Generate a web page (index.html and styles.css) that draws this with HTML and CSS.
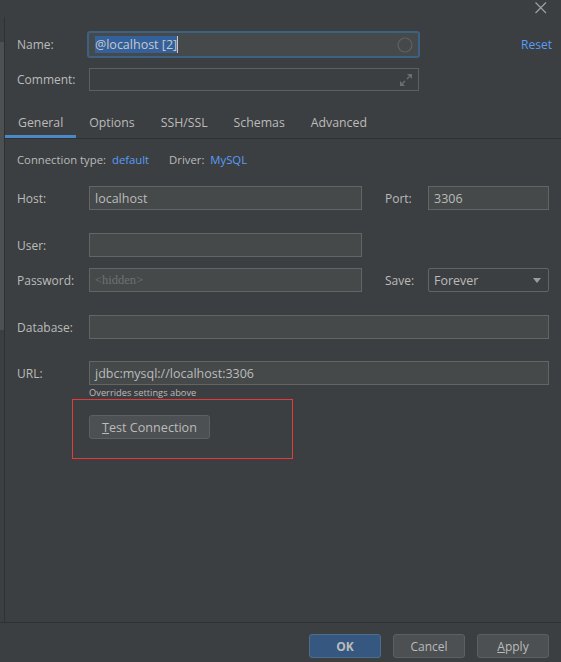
FILE: index.html
```html
<!DOCTYPE html>
<html>
<head>
<meta charset="utf-8">
<link rel="stylesheet" href="styles.css">
</head>
<body>
<div class="window">
  <div class="titlebar">
    <svg class="close" width="12" height="12" viewBox="0 0 12 12"><path d="M0.5 0.5 L11 11 M11 0.5 L0.5 11" stroke="#a0a0a0" stroke-width="1.2" fill="none"/></svg>
  </div>
  <div class="main">
    <div class="side"><div class="s1"></div><div class="s2"></div><div class="s3"></div></div>
    <div class="content">
      <div class="row name-row">
        <span class="lbl lbl-name">Name:</span>
        <div class="name-input">
          <span class="sel">@localhost [2]</span><span class="caret"></span>
          <svg class="circle" width="16" height="16" viewBox="0 0 16 16"><circle cx="8" cy="8" r="7" stroke="#5f6262" stroke-width="1.2" fill="none"/></svg>
        </div>
        <a class="reset">Reset</a>
      </div>
      <div class="row comment-row">
        <span class="lbl">Comment:</span>
        <div class="comment-input">
          <svg class="expand" width="12" height="12" viewBox="0 0 12 12" fill="#6b6e70"><polygon points="12,0 12,5 7,0"/><polygon points="0,12 0,7 5,12"/><path d="M9.5 2.5 L7 5 M2.5 9.5 L5 7" stroke="#6b6e70" stroke-width="1.4"/></svg>
        </div>
      </div>
      <div class="tabs">
        <span class="tab active">General</span>
        <span class="tab">Options</span>
        <span class="tab">SSH/SSL</span>
        <span class="tab">Schemas</span>
        <span class="tab">Advanced</span>
      </div>
      <div class="panel">
        <div class="conn-row">
          <span>Connection type:</span><a class="link">default</a>
          <span class="driver">Driver:</span><a class="link">MySQL</a>
        </div>
        <div class="row host-row">
          <span class="lbl">Host:</span>
          <div class="field host-field">localhost</div>
          <span class="lbl2">Port:</span>
          <div class="field port-field">3306</div>
        </div>
        <div class="row user-row">
          <span class="lbl">User:</span>
          <div class="field host-field"></div>
        </div>
        <div class="row pass-row">
          <span class="lbl">Password:</span>
          <div class="field host-field"><span class="hidden">&lt;hidden&gt;</span></div>
          <span class="lbl2">Save:</span>
          <div class="combo">Forever<span class="arrow"></span></div>
        </div>
        <div class="row db-row">
          <span class="lbl">Database:</span>
          <div class="field wide"></div>
        </div>
        <div class="row url-row">
          <span class="lbl">URL:</span>
          <div class="field wide">jdbc:mysql://localhost:3306</div>
        </div>
        <div class="hint">Overrides settings above</div>
        <div class="redbox">
          <button class="btn test"><u>T</u>est Connection</button>
        </div>
      </div>
    </div>
  </div>
  <div class="footer">
    <button class="btn ok">OK</button>
    <button class="btn">Cancel</button>
    <button class="btn"><u>A</u>pply</button>
  </div>
</div>
</body>
</html>
```
FILE: styles.css
```css
html, body {
  margin: 0;
  padding: 0;
  background: #3c3f41;
}
body {
  font-family: "Open Sans", "Noto Sans", sans-serif;
  font-size: 12px;
  color: #bbbbbb;
  width: 561px;
  height: 662px;
  overflow: hidden;
}
.window {
  display: flex;
  flex-direction: column;
  height: 662px;
}
.titlebar {
  height: 17px;
  display: flex;
  justify-content: flex-end;
  align-items: flex-start;
  padding-right: 14px;
  box-sizing: border-box;
  padding-top: 2px;
}
.main {
  display: flex;
  height: 605px;
}
.side {
  width: 4px;
  display: flex;
  flex-direction: column;
}
.s1 { height: 25px; }
.s2 { height: 288px; background: #4d5052; }
.s3 { flex: 1; }
.content {
  flex: 1;
  border-left: 1px solid #2f3133;
  display: flex;
  flex-direction: column;
}
.row {
  display: flex;
  align-items: center;
}
.lbl {
  width: 72px;
  flex: none;
}
.name-row {
  margin-top: 14px;
  padding-left: 12px;
  padding-right: 9px;
}
.lbl-name { width: 70px; }
.name-input {
  width: 333px;
  height: 27px;
  box-sizing: border-box;
  border: 2px solid #3d6185;
  border-radius: 3px;
  background: #45494a;
  display: flex;
  align-items: center;
  padding-left: 6px;
  font-size: 12.5px;
}
.sel {
  background: #34609c;
  color: #c8c8c8;
  line-height: 17px;
}
.caret {
  width: 1px;
  height: 17px;
  background: #c8c8c8;
}
.circle {
  margin-left: auto;
  margin-right: 5px;
}
.reset {
  margin-left: auto;
  color: #589df6;
}
.comment-row {
  margin-top: 10px;
  padding-left: 12px;
}
.comment-input {
  width: 330px;
  height: 23px;
  box-sizing: border-box;
  border: 1px solid #5e6060;
  display: flex;
  align-items: center;
  justify-content: flex-end;
  padding-right: 6px;
}
.tabs {
  margin-top: 17px;
  height: 31px;
  box-sizing: border-box;
  border-bottom: 1px solid #2f3133;
  display: flex;
  font-size: 12.3px;
}
.tab {
  padding: 0 13px;
  display: flex;
  align-items: center;
  box-sizing: border-box;
  border-bottom: 3px solid transparent;
  padding-top: 1px;
}
.tab.active {
  border-bottom-color: #4a88c7;
}
.panel {
  padding: 0 12px;
  display: flex;
  flex-direction: column;
}
.conn-row {
  margin-top: 12px;
  height: 16px;
  display: flex;
  align-items: center;
  font-size: 11.3px;
}
.link {
  color: #589df6;
  margin-left: 6px;
}
.driver { margin-left: 20px; }
.field {
  height: 24px;
  box-sizing: border-box;
  border: 1px solid #646464;
  background: #45494a;
  display: flex;
  align-items: center;
  padding-left: 5px;
  font-size: 12.5px;
}
.host-field { width: 273px; }
.lbl2 {
  width: 43px;
  margin-left: 23px;
  flex: none;
}
.port-field { width: 121px; }
.wide { width: 460px; }
.host-row { margin-top: 19px; }
.user-row { margin-top: 23px; }
.pass-row { margin-top: 11px; }
.db-row { margin-top: 23px; }
.url-row { margin-top: 22px; }
.hidden {
  font-family: "Liberation Serif", serif;
  color: #6f7173;
  font-size: 12.5px;
}
.combo {
  width: 121px;
  height: 24px;
  box-sizing: border-box;
  border: 1px solid #646464;
  border-radius: 2px;
  display: flex;
  align-items: center;
  padding-left: 5px;
  padding-right: 7px;
  font-size: 12.5px;
}
.arrow {
  margin-left: auto;
  width: 0;
  height: 0;
  border-left: 4px solid transparent;
  border-right: 4px solid transparent;
  border-top: 5px solid #9a9c9e;
}
.hint {
  margin-top: 2px;
  margin-left: 72px;
  font-size: 9.3px;
  height: 12px;
  line-height: 12px;
}
.redbox {
  margin-left: 55px;
  width: 221px;
  height: 60px;
  box-sizing: border-box;
  border: 1px solid #e53a3a;
  padding-left: 16px;
  padding-top: 15px;
}
.btn {
  font-family: "Open Sans", "Noto Sans", sans-serif;
  font-size: 12px;
  color: #bbbbbb;
  background: #4c5052;
  border: 1px solid #5e6060;
  border-radius: 3px;
  height: 24px;
  width: 72px;
  padding: 0;
  box-sizing: border-box;
}
.test {
  width: 121px;
  font-size: 12.6px;
}
.footer {
  flex: 1;
  border-top: 1px solid #2f3133;
  display: flex;
  justify-content: flex-end;
  align-items: flex-start;
  gap: 12px;
  padding-top: 11px;
  padding-right: 12px;
}
.btn.ok {
  background: #365880;
  border-color: #4c708c;
  font-weight: bold;
}
```
